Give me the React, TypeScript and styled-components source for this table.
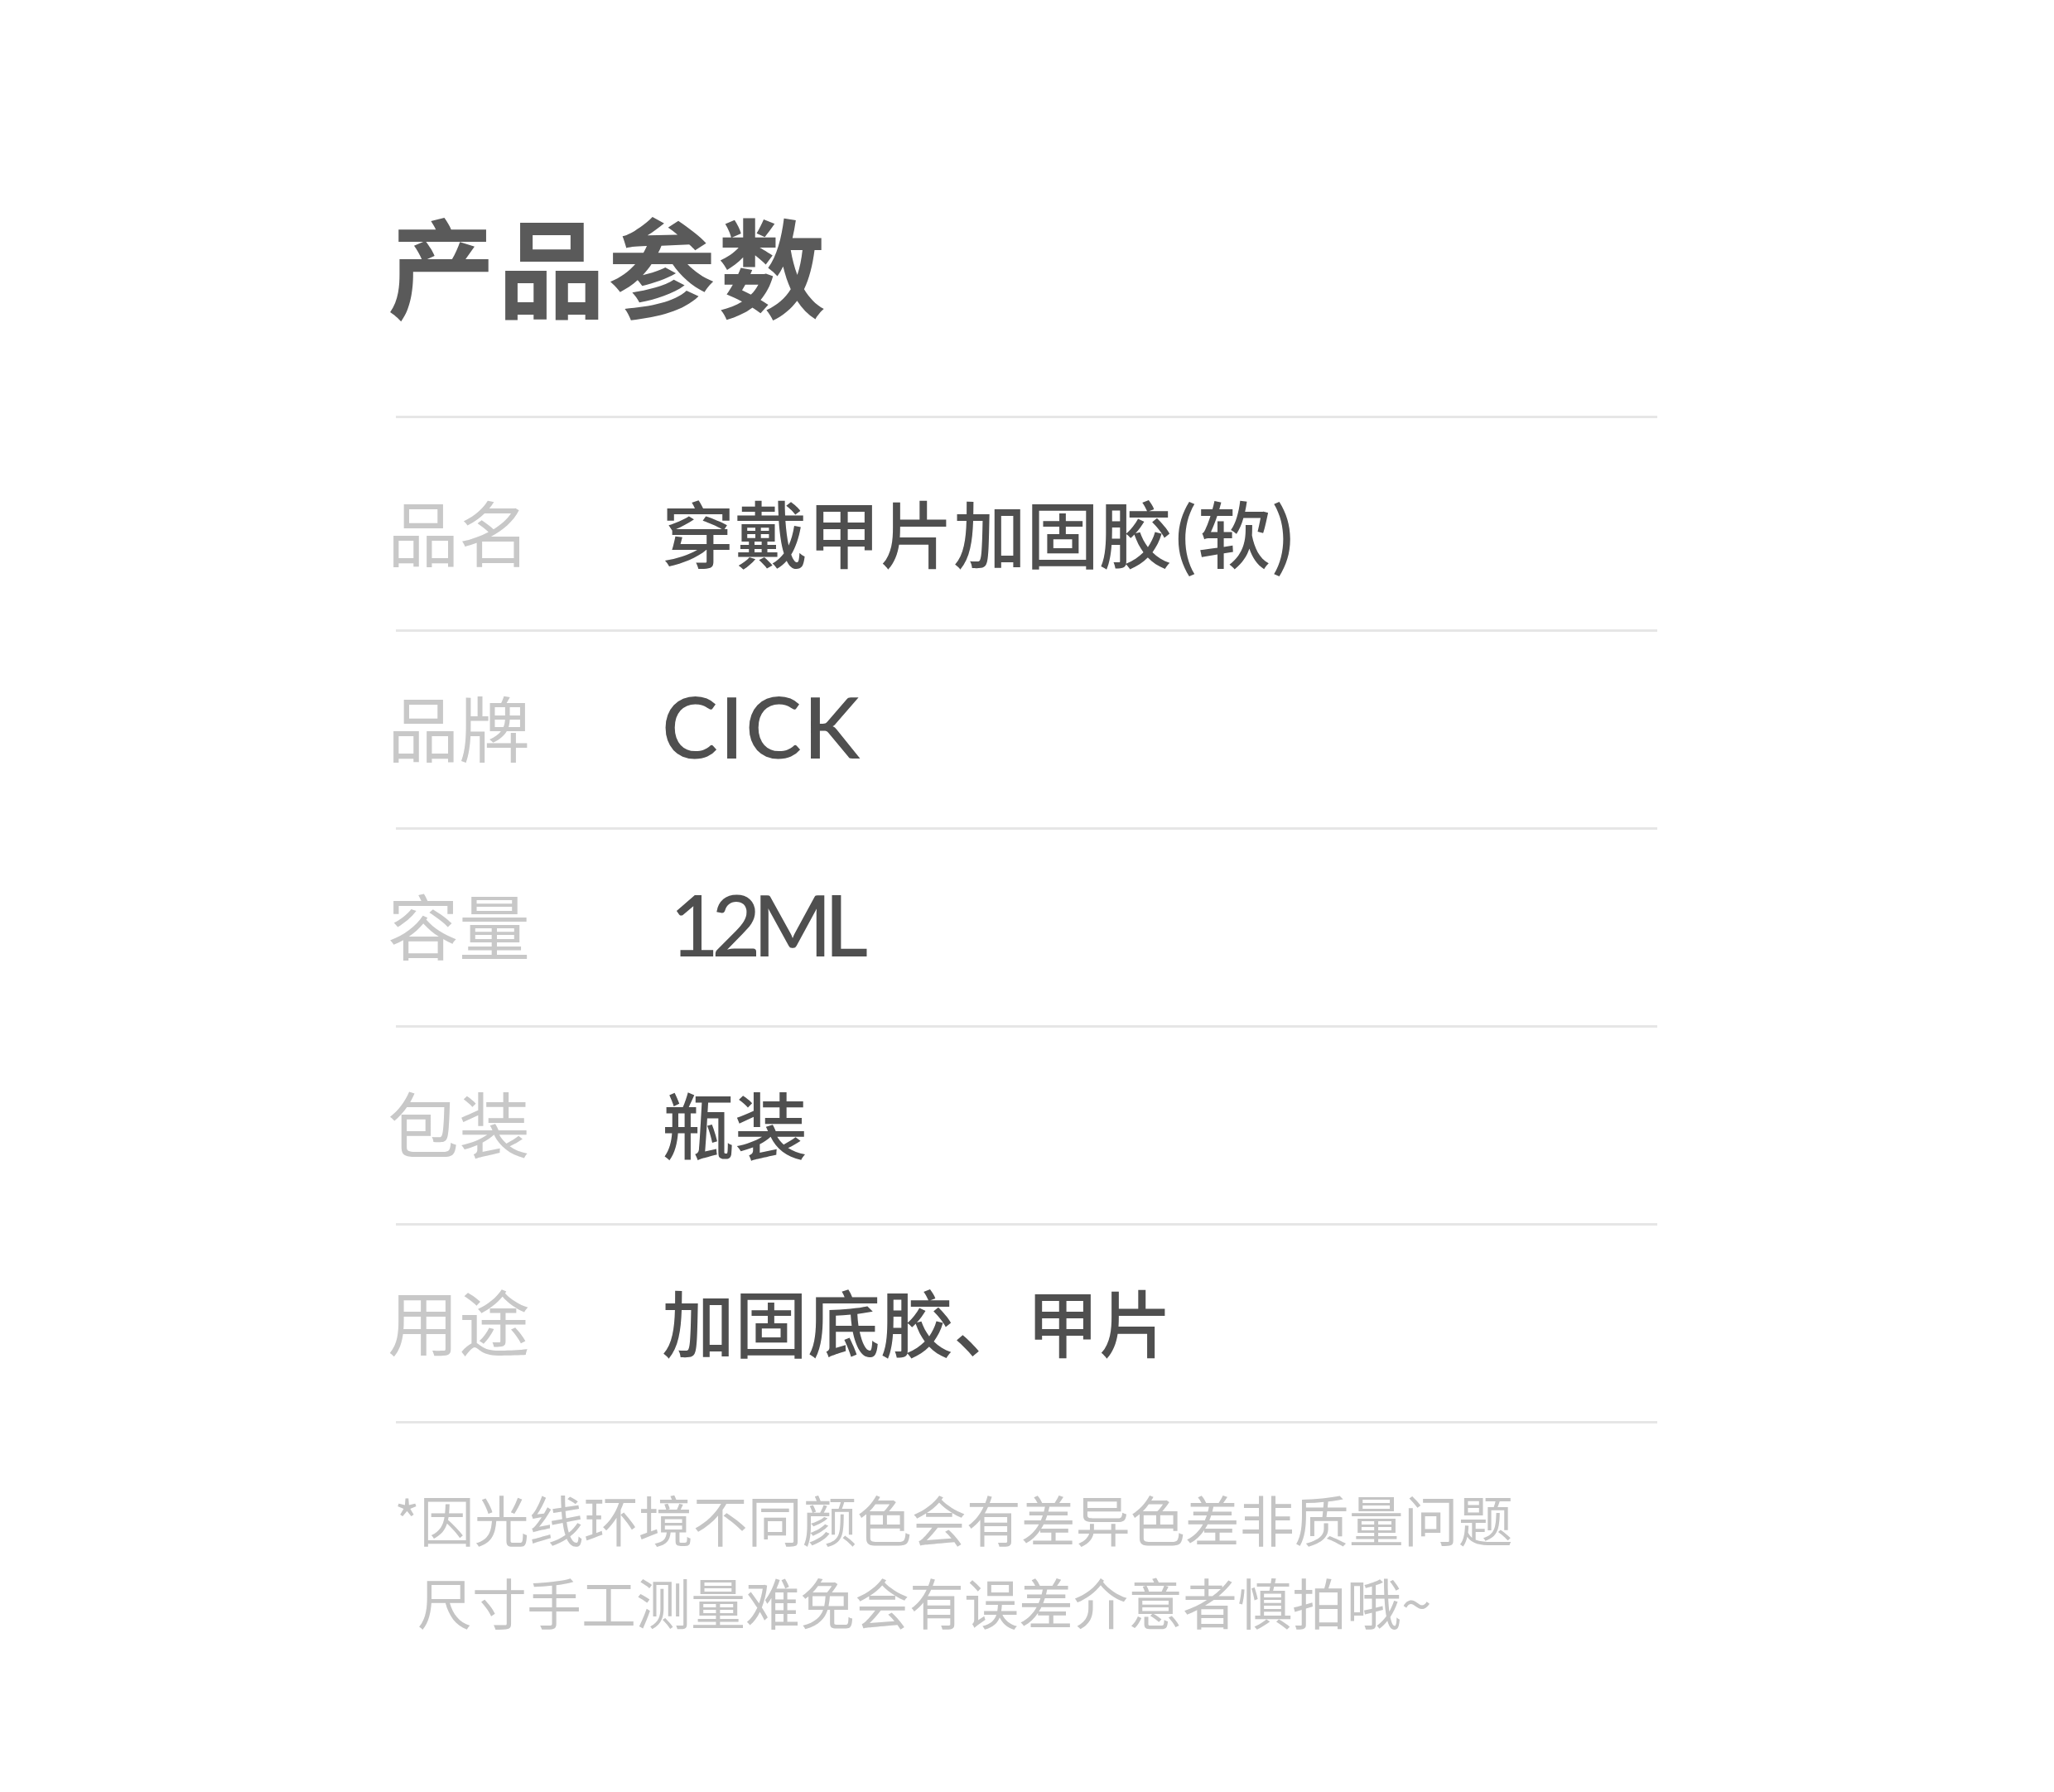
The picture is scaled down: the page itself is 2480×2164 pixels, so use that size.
import styled, { createGlobalStyle } from "styled-components";

const GlobalStyle = createGlobalStyle`
  html, body {
    margin: 0;
    padding: 0;
    background: #ffffff;
  }
  body {
    font-family: "Noto Sans CJK SC", "Noto Sans", sans-serif;
  }
`;

const Page = styled.div`
  width: 2480px;
  min-height: 2164px;
  box-sizing: border-box;
  padding: 252px 0 0 468px;
  background: #ffffff;
`;

const Title = styled.h1`
  margin: 0;
  font-family: "Noto Sans CJK SC", sans-serif;
  font-size: 130px;
  line-height: 1;
  font-weight: 600;
  color: #5a5a5a;
  letter-spacing: 3px;
`;

const Table = styled.div`
  margin-top: 120px;
  display: flex;
  flex-direction: column;
`;

const Divider = styled.div`
  margin-left: 10px;
  width: 1523px;
  height: 3px;
  background: #e6e6e6;
`;

const Row = styled.div<{ $first?: boolean }>`
  display: flex;
  align-items: center;
  box-sizing: border-box;
  height: ${(p) => (p.$first ? 255 : 236)}px;
  padding-top: ${(p) => (p.$first ? 16 : 0)}px;
  padding-bottom: ${(p) => (p.$first ? 0 : 8)}px;
`;

const Label = styled.div`
  width: 331px;
  flex-shrink: 0;
  font-family: "Noto Sans CJK SC", sans-serif;
  font-size: 86px;
  line-height: 1;
  color: #c8c8c8;
`;

const Value = styled.div<{ $latin?: boolean; $tracking?: number; $indent?: number }>`
  font-family: ${(p) =>
    p.$latin ? `Lato, "Noto Sans", sans-serif` : `"Noto Sans CJK SC", sans-serif`};
  font-size: ${(p) => (p.$latin ? 102 : 88)}px;
  line-height: 1;
  font-weight: 500;
  color: #4f4f4f;
  letter-spacing: ${(p) => p.$tracking ?? 0}px;
  padding-left: ${(p) => p.$indent ?? 0}px;
  white-space: nowrap;
`;

const Note = styled.div`
  margin-top: 64px;
  margin-left: 8px;
  font-family: "Noto Sans CJK SC", sans-serif;
  font-size: 66px;
  line-height: 100px;
  color: #c4c4c4;
`;

const NoteLine = styled.div<{ $indent?: boolean }>`
  padding-left: ${(p) => (p.$indent ? 28 : 0)}px;
  white-space: nowrap;
`;

const params = [
  { label: "品名", value: "穿戴甲片加固胶(软)" },
  { label: "品牌", value: "CICK", latin: true, tracking: 2 },
  { label: "容量", value: "12ML", latin: true, tracking: -9, indent: 10 },
  { label: "包装", value: "瓶装" },
  { label: "用途", value: "加固底胶、甲片" },
];

function App() {
  return (
    <>
      <GlobalStyle />
      <Page>
        <Title>产品参数</Title>
        <Table>
          <Divider />
          {params.map((item, i) => (
            <div key={item.label}>
              <Row $first={i === 0}>
                <Label>{item.label}</Label>
                <Value
                  $latin={item.latin}
                  $tracking={item.tracking}
                  $indent={item.indent}
                >
                  {item.value}
                </Value>
              </Row>
              <Divider />
            </div>
          ))}
        </Table>
        <Note>
          <NoteLine>*因光线环境不同颜色会有差异色差非质量问题</NoteLine>
          <NoteLine $indent>尺寸手工测量难免会有误差介意者慎拍哦~</NoteLine>
        </Note>
      </Page>
    </>
  );
}

export default App;
